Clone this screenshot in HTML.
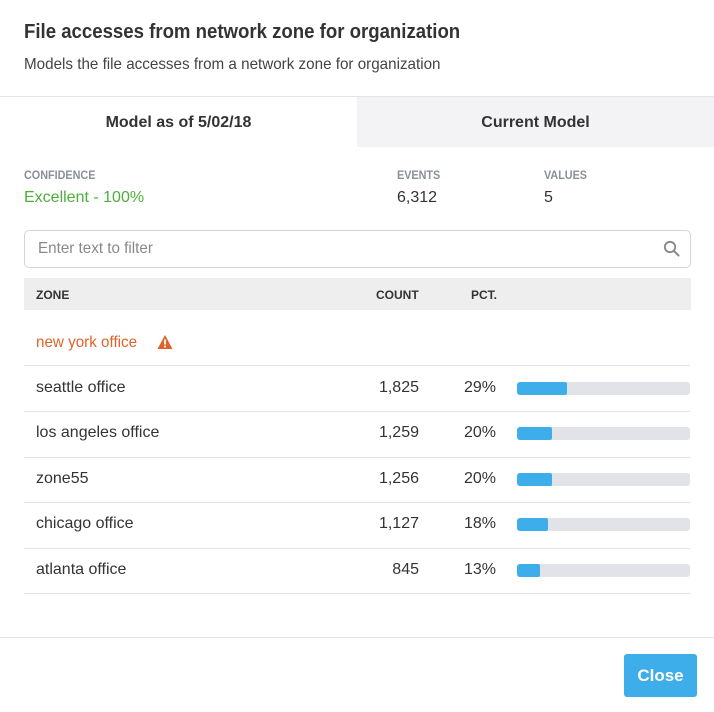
<!DOCTYPE html>
<html><head><style>
*{margin:0;padding:0;box-sizing:border-box}
body{width:714px;height:712px;background:#fff;font-family:"Liberation Sans",sans-serif;color:#333;position:relative;overflow:hidden}
.a{position:absolute;white-space:nowrap}
.lbl{font-size:12px;color:#8a8f99;font-weight:bold;transform:scaleX(.9);transform-origin:left}
.v{font-size:16px}
.line{position:absolute;left:24px;width:666px;height:1px;background:#e2e3e6}
.row{position:absolute;left:24px;width:666px;height:45px;font-size:16px}
.row .n{position:absolute;left:12px;top:13px}
.row .c{position:absolute;right:271px;top:13px}
.row .p{position:absolute;left:440px;top:13px}
.bar{position:absolute;left:493px;top:16px;width:173px;height:13px;background:#e2e3e8;border-radius:3px;overflow:hidden}
.bar i{display:block;height:100%;background:#3daee9;border-radius:2px}
.sq{transform:scaleX(.95);transform-origin:left}
</style></head><body>
<div class="a sq" style="left:24px;top:21px;font-size:20px;font-weight:bold;color:#333;transform:scaleX(.93)">File accesses from network zone for organization</div>
<div class="a sq" style="left:24px;top:56px;font-size:16px;color:#444">Models the file accesses from a network zone for organization</div>
<div class="a" style="left:0;top:96px;width:714px;height:1px;background:#e2e3e6"></div>
<div class="a" style="left:357px;top:97px;width:357px;height:50px;background:#f3f3f6"></div>
<div class="a" style="left:0;top:114px;width:357px;text-align:center;font-size:16px;font-weight:bold">Model as of 5/02/18</div>
<div class="a" style="left:357px;top:114px;width:357px;text-align:center;font-size:16px;font-weight:bold">Current Model</div>
<div class="a lbl" style="left:24px;top:168px">CONFIDENCE</div>
<div class="a lbl" style="left:397px;top:168px">EVENTS</div>
<div class="a lbl" style="left:544px;top:168px">VALUES</div>
<div class="a v" style="left:24px;top:189px;color:#4caf3a">Excellent - 100%</div>
<div class="a v" style="left:397px;top:189px">6,312</div>
<div class="a v" style="left:544px;top:189px">5</div>
<div class="a" style="left:24px;top:230px;width:667px;height:38px;border:1px solid #d3d5dc;border-radius:5px"></div>
<div class="a sq" style="left:38px;top:240px;font-size:16px;color:#888">Enter text to filter</div>
<svg class="a" style="left:663px;top:240px" width="18" height="18" viewBox="0 0 18 18"><circle cx="7" cy="7" r="5.2" fill="none" stroke="#888" stroke-width="1.8"/><path d="M11 11l4.5 4.5" stroke="#888" stroke-width="2" stroke-linecap="round"/></svg>
<div class="a" style="left:24px;top:278px;width:667px;height:32px;background:#eeeeee"></div>
<div class="a" style="left:36px;top:288px;font-size:12px;font-weight:bold">ZONE</div>
<div class="a" style="left:376px;top:288px;font-size:12px;font-weight:bold">COUNT</div>
<div class="a" style="left:471px;top:288px;font-size:12px;font-weight:bold">PCT.</div>
<div class="a sq" style="left:36px;top:334px;font-size:16px;color:#e0622a">new york office</div>
<svg class="a" style="left:157px;top:334px" width="16" height="16" viewBox="0 0 16 16"><path d="M8 1L15.5 15H.5z" fill="#e0622a"/><rect x="7.1" y="5.5" width="1.8" height="5" fill="#fff"/><rect x="7.1" y="11.6" width="1.8" height="1.8" fill="#fff"/></svg>
<div class="line" style="top:365px"></div>
<div class="row" style="top:366px"><span class="n">seattle office</span><span class="c">1,825</span><span class="p">29%</span><div class="bar"><i style="width:50px"></i></div></div>
<div class="line" style="top:411px"></div>
<div class="row" style="top:411px"><span class="n">los angeles office</span><span class="c">1,259</span><span class="p">20%</span><div class="bar"><i style="width:35px"></i></div></div>
<div class="line" style="top:457px"></div>
<div class="row" style="top:457px"><span class="n">zone55</span><span class="c">1,256</span><span class="p">20%</span><div class="bar"><i style="width:35px"></i></div></div>
<div class="line" style="top:502px"></div>
<div class="row" style="top:502px"><span class="n">chicago office</span><span class="c">1,127</span><span class="p">18%</span><div class="bar"><i style="width:31px"></i></div></div>
<div class="line" style="top:548px"></div>
<div class="row" style="top:548px"><span class="n">atlanta office</span><span class="c">845</span><span class="p">13%</span><div class="bar"><i style="width:23px"></i></div></div>
<div class="line" style="top:593px"></div>
<div class="a" style="left:0;top:637px;width:714px;height:1px;background:#e2e3e6"></div>
<div class="a" style="left:624px;top:654px;width:73px;height:43px;background:#3daee9;border-radius:3px;color:#fff;font-size:17px;font-weight:bold;text-align:center;line-height:43px">Close</div>
</body></html>
